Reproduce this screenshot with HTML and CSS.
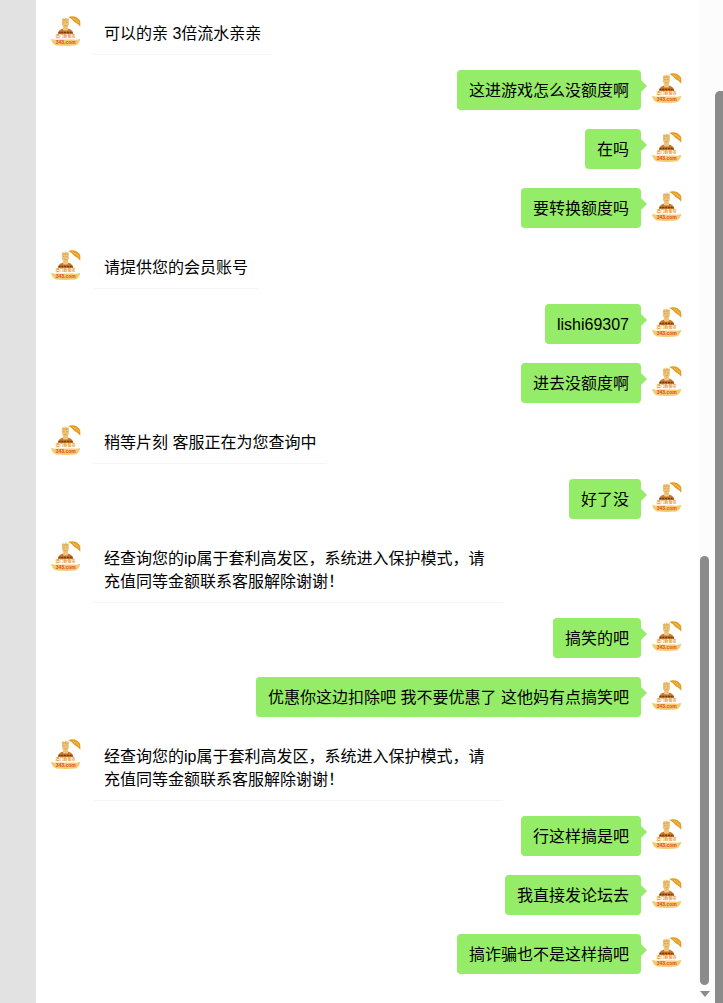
FILE: index.html
```html
<!DOCTYPE html>
<html lang="zh-CN">
	<head>
		<title>在线客服</title>
		<meta charset="utf-8">
		<meta name="viewport" content="width=device-width, initial-scale=1">
		<link rel="stylesheet" href="styles.css">
	</head>
	<body>
		<!-- avatar shared by both sides -->
		<svg class="sprite" aria-hidden="true">
			<symbol id="avatar" viewBox="0 0 30 30">
				<path d="M17.300 .9Q21.500-.4 25.500 1.200Q29 3.500 29.300 6V10.800Q27 7.500 23.500 6Q21 2.500 17.300 .9Z" fill="#e39a1c"/>
				<path d="M21.500 1.800l2.500 2M24.500 2.500l1.200 3M26.500 4.500l1.500 2.500" stroke="#f8d690" stroke-width=".7"/>
				<path d="M11 3l1.500-1 .8 1L15 1.200l1 1.600 1.800-.6V9l-1 2v2h-4.600v-2L11 9Z" fill="#eec276"/>
				<path d="M11.500 4h5.800M12 6.600h1.600M15.200 6.600h1.600M13.300 9.600h2.500" stroke="#d09a4c" stroke-width=".7"/>
				<path d="M7 18Q7 14 11.500 12.800h6Q22 14 22.300 18Z" fill="#c67a2e"/>
				<path d="M11.500 12.200h6l-1 2.300h-4Z" fill="#f0c780"/>
				<path d="M7.500 16.500h14.500" stroke="#7a3510" stroke-width="1.600" stroke-dasharray="2 .8"/>
				<path d="M0 22.800Q3 24 8 23.600h14Q26.500 24 29.300 22.800Q28.500 28 24.500 29.500Q15 30.400 5 29.500Q1 28 0 22.800Z" fill="#f0cd70"/>
				<text class="brand" x="14.500" y="22.300">澳门新葡京</text>
				<text class="site" x="14.800" y="28.300">343.com</text>
			</symbol>
		</svg>

		<div class="page">
			<div class="side"></div>
			<div class="chat">
				<div class="row service">
					<svg class="avatar"><use href="#avatar"/></svg>
					<div class="body"><p class="bubble">可以的亲 3倍流水亲亲</p></div>
				</div>
				<div class="row user">
					<svg class="avatar"><use href="#avatar"/></svg>
					<div class="body"><p class="bubble">这进游戏怎么没额度啊</p></div>
				</div>
				<div class="row user">
					<svg class="avatar"><use href="#avatar"/></svg>
					<div class="body"><p class="bubble">在吗</p></div>
				</div>
				<div class="row user">
					<svg class="avatar"><use href="#avatar"/></svg>
					<div class="body"><p class="bubble">要转换额度吗</p></div>
				</div>
				<div class="row service">
					<svg class="avatar"><use href="#avatar"/></svg>
					<div class="body"><p class="bubble">请提供您的会员账号</p></div>
				</div>
				<div class="row user">
					<svg class="avatar"><use href="#avatar"/></svg>
					<div class="body"><p class="bubble">lishi69307</p></div>
				</div>
				<div class="row user">
					<svg class="avatar"><use href="#avatar"/></svg>
					<div class="body"><p class="bubble">进去没额度啊</p></div>
				</div>
				<div class="row service">
					<svg class="avatar"><use href="#avatar"/></svg>
					<div class="body"><p class="bubble">稍等片刻 客服正在为您查询中</p></div>
				</div>
				<div class="row user">
					<svg class="avatar"><use href="#avatar"/></svg>
					<div class="body"><p class="bubble">好了没</p></div>
				</div>
				<div class="row service">
					<svg class="avatar"><use href="#avatar"/></svg>
					<div class="body"><p class="bubble">经查询您的ip属于套利高发区，系统进入保护模式，请充值同等金额联系客服解除谢谢！</p></div>
				</div>
				<div class="row user">
					<svg class="avatar"><use href="#avatar"/></svg>
					<div class="body"><p class="bubble">搞笑的吧</p></div>
				</div>
				<div class="row user">
					<svg class="avatar"><use href="#avatar"/></svg>
					<div class="body"><p class="bubble">优惠你这边扣除吧 我不要优惠了 这他妈有点搞笑吧</p></div>
				</div>
				<div class="row service">
					<svg class="avatar"><use href="#avatar"/></svg>
					<div class="body"><p class="bubble">经查询您的ip属于套利高发区，系统进入保护模式，请充值同等金额联系客服解除谢谢！</p></div>
				</div>
				<div class="row user">
					<svg class="avatar"><use href="#avatar"/></svg>
					<div class="body"><p class="bubble">行这样搞是吧</p></div>
				</div>
				<div class="row user">
					<svg class="avatar"><use href="#avatar"/></svg>
					<div class="body"><p class="bubble">我直接发论坛去</p></div>
				</div>
				<div class="row user">
					<svg class="avatar"><use href="#avatar"/></svg>
					<div class="body"><p class="bubble">搞诈骗也不是这样搞吧</p></div>
				</div>
			</div>
			<div class="scroll">
				<div class="thumb"></div>
				<svg class="down" viewBox="0 0 10 6"><path d="M0 0h10L5 6Z"/></svg>
			</div>
			<div class="outerScroll">
				<div class="outerThumb"></div>
			</div>
		</div>
	</body>
</html>
```

FILE: styles.css
```css
* {box-sizing: border-box;}
body {
	margin: 0;
	background: #fff;
	color: #000;
	font: 16px/23px "Liberation Sans", "Noto Sans CJK SC", sans-serif;
}
.sprite {display: none;}
.page {display: flex; min-height: 100vh;}
.side {flex: none; width: 36px; background: #e2e2e2;}

/* messages */
.chat {flex: 1; min-width: 0; padding: 13px 16px 0 15px;}
.row {display: flex; gap: 11px;}
.service {padding-bottom: 15px;}
.user {flex-direction: row-reverse; padding-bottom: 19px;}
.avatar {flex: none; width: 30px; height: 30px; margin-top: 3px;}
.body {flex: 1; min-width: 0; display: flex;}
.user .body {justify-content: flex-end;}
.bubble {
	position: relative;
	max-width: 70%;
	margin: 0;
	padding: 9px 12px;
	border-radius: 4px;
}
.service .bubble {border-bottom: 1px solid #f5f5f5;}
.user .bubble {background: #95ec69; padding-bottom: 8px;}
.user .bubble::after {
	content: "";
	position: absolute;
	top: 10px;
	left: 100%;
	border: 6px solid transparent;
	border-left-color: #95ec69;
	border-right: 0;
}

/* avatar lettering */
.brand, .site {font-family: "Liberation Sans", "Noto Sans CJK SC", sans-serif; text-anchor: middle;}
.brand {font-size: 4px; font-weight: 700; fill: #e69a3c;}
.site {font-size: 5px; font-weight: 700; fill: #e8482a;}

/* scrollbars */
.scroll {
	flex: none;
	width: 17px;
	padding: 0 6px 6px 2px;
	background: #fcfcfc;
	display: flex;
	flex-direction: column;
	justify-content: flex-end;
	align-items: center;
	gap: 6px;
}
.thumb {width: 9px; height: 43%; border-radius: 5px; background: #8b8b8b;}
.down {width: 10px; height: 6px; fill: #8b8b8b;}
.outerScroll {flex: none; width: 8px; padding-top: 91px; background: #fcfcfc; display: flex;}
.outerThumb {flex: 1; background: #8b8b8b; border-top-left-radius: 5px;}
```
